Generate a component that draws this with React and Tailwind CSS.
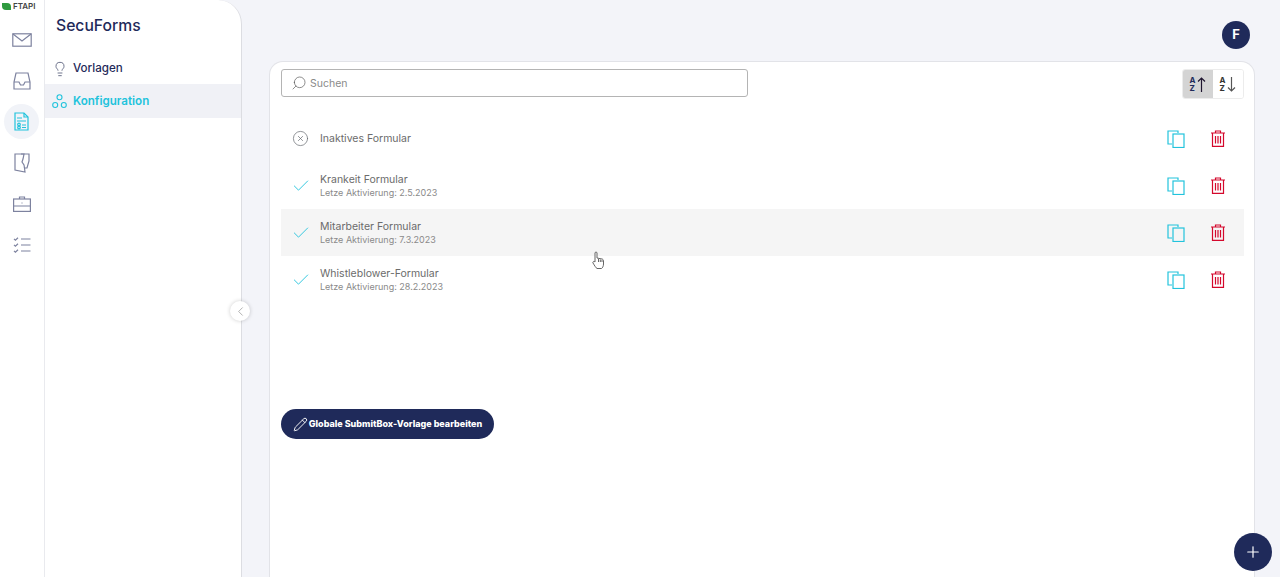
import React from 'react';
import { Lightbulb, ChevronLeft, Plus, Check, CircleX, Pencil, Search } from 'lucide-react';

const MailIcon = () => (
  <svg width="20" height="14" viewBox="0 0 20 14" fill="none" stroke="#7d829f" strokeWidth="1.2">
    <rect x="0.8" y="0.8" width="18.4" height="12.4" />
    <path d="M1 1l9 7 9-7" />
  </svg>
);

const InboxIcon = () => (
  <svg width="18" height="18" viewBox="0 0 18 18" fill="none" stroke="#7d829f" strokeWidth="1.2">
    <path d="M3 1h12l2 9v7H1v-7z" />
    <path d="M1 10h5l1.5 3h3L12 10h5" />
  </svg>
);

const FormIcon = () => (
  <svg width="15" height="19" viewBox="0 0 15 19" fill="none" stroke="#22c3dc" strokeWidth="1.2">
    <path d="M1 1h9l4 4v13H1z" />
    <path d="M10 1v4h4M3 6h5M3 9h9" />
    <circle cx="5" cy="12.5" r="1.3" />
    <circle cx="5" cy="15.5" r="1.3" />
    <path d="M8 13h4M8 15.5h4" />
  </svg>
);

const MapIcon = () => (
  <svg width="16" height="20" viewBox="0 0 16 20" fill="none" stroke="#7d829f" strokeWidth="1.2">
    <path d="M1 1h14v7l-2 7h-2.500l.5 4-10-2z" />
    <path d="M7 1h3l-1 5-1 3 2 3 .5 3" />
  </svg>
);

const CaseIcon = () => (
  <svg width="18" height="16" viewBox="0 0 18 16" fill="none" stroke="#7d829f" strokeWidth="1.2">
    <rect x="0.6" y="3" width="16.800" height="12.400" />
    <path d="M0.600 10h16.800M6.500 3V1h5v2" />
    <path d="M8.500 7h1" />
  </svg>
);

const ChecklistIcon = () => (
  <svg width="18" height="16" viewBox="0 0 18 16" fill="none" stroke="#7d829f" strokeWidth="1.2">
    <path d="M8 2h9.500M8 8h9.500M8 14h9.500" />
    <path d="M1 1.800l1.400 1.400L5 .800M1 7.800l1.400 1.400L5 6.800M1 13.800l1.400 1.400L5 12.800" />
  </svg>
);

const ConfigIcon = () => (
  <svg width="15" height="15" viewBox="0 0 15 15" fill="none" stroke="#22c3dc" strokeWidth="1.1">
    <circle cx="7.500" cy="3.300" r="2.500" />
    <circle cx="3.200" cy="11" r="2.500" />
    <circle cx="11.800" cy="11" r="2.500" />
  </svg>
);

const CopyIcon = () => (
  <svg width="18" height="18" viewBox="0 0 18 18" fill="none" stroke="#22c3dc" strokeWidth="1.2">
    <path d="M11 3V1H1v13h4" />
    <rect x="6" y="4" width="11" height="13.500" />
  </svg>
);

const TrashIcon = () => (
  <svg width="14" height="17" viewBox="0 0 14 17" fill="none" stroke="#d4082c" strokeWidth="1.2">
    <path d="M0 3h14M4.500 3V1h5v2" />
    <path d="M1.500 3v13.400h11V3" />
    <path d="M4.500 6v7.500M7 6v7.500M9.500 6v7.500" />
  </svg>
);

const HandCursor = () => (
  <svg width="12" height="18" viewBox="0 0 12 18" fill="#ffffff" stroke="#555" strokeWidth="0.9">
    <path d="M3 9V2c0-1.300 2-1.300 2 0v5l5 1c1 .2 1.500 1 1.500 2v3c0 2-1 4-2 4.500H5c-1-.5-2.500-3-4-5.500-.7-1.200 1-2.200 2-1z" />
    <path d="M6.500 8v3M8.300 8.500V11M10 9v2" />
  </svg>
);

const railIcons = [
  { icon: <MailIcon /> },
  { icon: <InboxIcon /> },
  { icon: <FormIcon />, active: true },
  { icon: <MapIcon /> },
  { icon: <CaseIcon /> },
  { icon: <ChecklistIcon /> },
];

const forms = [
  { name: 'Inaktives Formular', inactive: true },
  { name: 'Krankeit Formular', date: '2.5.2023' },
  { name: 'Mitarbeiter Formular', date: '7.3.2023', hover: true },
  { name: 'Whistleblower-Formular', date: '28.2.2023' },
];

const FormRow = ({ form }) => (
  <div className={`relative flex h-[47px] items-center pl-[11px] ${form.hover ? 'bg-[#f5f5f5]' : ''}`}>
    <div className="flex w-[28px] items-center justify-start">
      {form.inactive ? (
        <CircleX size={17} strokeWidth={1} color="#666a70" />
      ) : (
        <Check size={20} strokeWidth={1.1} color="#22c3dc" className="-ml-[1px]" />
      )}
    </div>
    <div className="flex flex-col">
      <span className="text-[10.500px] leading-[15px] text-[#6b6b6b]">{form.name}</span>
      {form.date && (
        <span className="text-[9px] leading-[12px] text-[#8a8a8a]">
          Letze Aktivierung: {form.date}
        </span>
      )}
    </div>
    <div className="ml-auto flex items-center gap-[26px] pr-[19px]">
      <CopyIcon />
      <TrashIcon />
    </div>
    {form.hover && (
      <div className="absolute left-[311px] top-[42px]">
        <HandCursor />
      </div>
    )}
  </div>
);

export default function App() {
  return (
    <div className="relative flex h-[577px] w-[1280px] overflow-hidden bg-[#f3f4f9] font-['Inter',sans-serif]">
      {/* Icon rail */}
      <aside className="flex w-[45px] shrink-0 flex-col border-r border-[#e9eaee] bg-white">
        <div className="flex h-[19px] items-start gap-[2px] pl-[2px] pt-[2px]">
          <svg width="9" height="9" viewBox="0 0 9 9">
            <path d="M0 1h5a4 4 0 0 1 4 4v3H4a4 4 0 0 1-4-4z" fill="#2e9a3f" />
          </svg>
          <span className="text-[8px] font-semibold leading-[9px] text-[#444]">FTAPI</span>
        </div>
        <div className="flex flex-col items-center">
          {railIcons.map((item, i) => (
            <div key={i} className="flex h-[41px] w-full items-center pl-[4px]">
              <div className={`flex h-[35px] w-[35px] items-center justify-center rounded-full ${item.active ? 'bg-[#f1f3f8]' : ''}`}>
                {item.icon}
              </div>
            </div>
          ))}
        </div>
      </aside>

      {/* Secondary nav */}
      <nav className="relative w-[197px] shrink-0 rounded-tr-[24px] border-r border-[#dcdde2] bg-white">
        <div className="pl-[11px] pt-[17px] text-[15.700px] font-medium leading-[18px] text-[#1f2a5a]">SecuForms</div>
        <div className="mt-[15px] flex h-[34px] items-center pl-[7px] pt-[3px] text-[11.600px] font-medium text-[#1f2a5a]">
          <Lightbulb size={16} strokeWidth={1.2} color="#4a5070" />
          <span className="ml-[5px]">Vorlagen</span>
        </div>
        <div className="flex h-[34px] items-center bg-[#f0f1f6] pl-[7px] pt-[1px] text-[11.600px] font-semibold text-[#22c3dc]">
          <ConfigIcon />
          <span className="ml-[6px]">Konfiguration</span>
        </div>
        <button className="absolute left-[185px] top-[301px] flex h-[20px] w-[20px] items-center justify-center rounded-full bg-white shadow-[0_0_4px_rgba(0,0,0,0.2)]">
          <ChevronLeft size={15} strokeWidth={1.2} color="#9a9a9a" />
        </button>
      </nav>

      {/* Main */}
      <main className="flex min-w-0 flex-1 flex-col pl-[27px] pr-[25px]">
        <div className="flex h-[61px] shrink-0 items-start justify-end pr-[5px] pt-[21px]">
          <div className="flex h-[28px] w-[28px] items-center justify-center rounded-full bg-[#1f2a5a] text-[13px] font-bold text-white">F</div>
        </div>
        <section className="flex-1 rounded-t-[14px] border border-b-0 border-[#e2e3e8] bg-white pl-[11px] pr-[10px] pt-[7px]">
          <div className="flex h-[30px] items-start justify-between">
            <div className="flex h-[28px] w-[467px] items-center gap-[3px] rounded-[3px] border border-[#b4b4b4] pl-[9px]">
              <Search size={16} strokeWidth={1} color="#555" className="-scale-x-100" />
              <span className="mt-[1px] text-[10.500px] text-[#8a8a8a]">Suchen</span>
            </div>
            <div className="flex h-[30px] w-[62px] overflow-hidden rounded-[3px] border border-[#ececec]">
              <div className="flex flex-1 items-center justify-center gap-[2px] bg-[#d4d4d4]">
                <div className="flex flex-col text-[8px] font-bold leading-[8px] text-[#1f2a5a]"><span>A</span><span>Z</span></div>
                <svg width="9" height="15" viewBox="0 0 9 15" fill="none" stroke="#1f1530" strokeWidth="1.2"><path d="M4.500 15V1M1 4.500L4.500 1 8 4.500" /></svg>
              </div>
              <div className="flex flex-1 items-center justify-center gap-[2px] bg-white">
                <div className="flex flex-col text-[8px] font-bold leading-[8px] text-[#333]"><span>A</span><span>Z</span></div>
                <svg width="9" height="15" viewBox="0 0 9 15" fill="none" stroke="#555" strokeWidth="1.2"><path d="M4.500 0v14M1 10.500L4.500 14 8 10.500" /></svg>
              </div>
            </div>
          </div>
          <div className="mt-[16px] flex flex-col">
            {forms.map((form) => (
              <FormRow key={form.name} form={form} />
            ))}
          </div>
          <button className="mt-[106px] flex h-[30px] w-[213px] items-center justify-center gap-[1px] rounded-full bg-[#1f2a5a] text-[9px] font-extrabold text-white">
            <Pencil size={15} strokeWidth={1.5} color="#ffffff" />
            Globale SubmitBox-Vorlage bearbeiten
          </button>
        </section>
      </main>

      <button className="absolute left-[1234px] top-[533px] flex h-[38px] w-[38px] items-center justify-center rounded-full bg-[#1f2a5a]">
        <Plus size={18} strokeWidth={1.6} color="#ffffff" />
      </button>
    </div>
  );
}
